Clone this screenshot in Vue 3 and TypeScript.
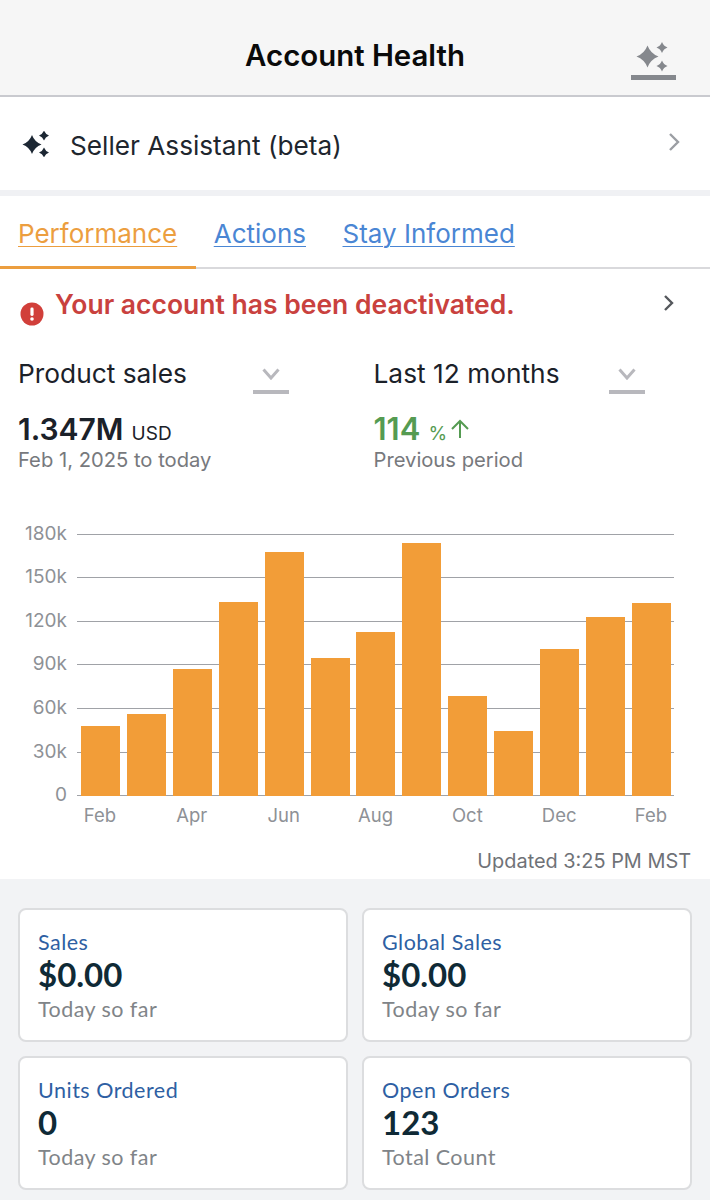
<template>
  <div class="page">
    <header class="top-bar">
      <span></span>
      <h1>Account Health</h1>
      <svg class="top-icon" width="46" height="38" viewBox="0 0 46 38">
        <path :d="star(16.5, 14.5, 11)" />
        <path :d="star(31, 5.5, 5.5)" />
        <path :d="star(31, 24, 5.5)" />
        <rect x="0" y="33" width="45" height="5" />
      </svg>
    </header>

    <div class="assistant">
      <svg width="28" height="26" viewBox="0 0 28 26">
        <path :d="star(10, 13.5, 9.5)" />
        <path :d="star(22, 4.5, 5)" />
        <path :d="star(22, 21.5, 5)" />
      </svg>
      <span class="assistant-label">Seller Assistant (beta)</span>
      <svg class="assistant-chevron" width="13" height="20" viewBox="0 0 13 20">
        <path d="M2 2l8 8-8 8" />
      </svg>
    </div>

    <nav class="tabs">
      <a class="tab active">Performance</a>
      <a class="tab">Actions</a>
      <a class="tab">Stay Informed</a>
    </nav>

    <div class="alert">
      <svg class="alert-icon" width="24" height="24" viewBox="0 0 24 24">
        <circle cx="12" cy="12" r="11.5" />
        <rect x="10.4" y="5.5" width="3.2" height="8.5" rx="1.4" />
        <circle class="dot" cx="12" cy="17" r="1.8" />
      </svg>
      <span class="alert-text">Your account has been deactivated.</span>
      <svg class="alert-chevron" width="12" height="18" viewBox="0 0 12 18">
        <path d="M2 2l7 7-7 7" />
      </svg>
    </div>

    <section class="stats">
      <div class="stat">
        <div class="select">
          <span>Product sales</span>
          <span class="caret">
            <svg width="18" height="12" viewBox="0 0 18 12"><path d="M1.5 1.5L9 10l7.500-8.500" /></svg>
          </span>
        </div>
        <div class="figure"><b>1.347M</b> <small>USD</small></div>
        <div class="note">Feb 1, 2025 to today</div>
      </div>
      <div class="stat">
        <div class="select">
          <span>Last 12 months</span>
          <span class="caret">
            <svg width="18" height="12" viewBox="0 0 18 12"><path d="M1.5 1.5L9 10l7.500-8.500" /></svg>
          </span>
        </div>
        <div class="figure up">
          <b>114</b> <small>%</small>
          <svg width="20" height="20" viewBox="0 0 20 20"><path d="M10 19V2M2 10l8-8 8 8" /></svg>
        </div>
        <div class="note">Previous period</div>
      </div>
    </section>

    <section class="chart">
      <div class="plot">
        <div class="grid-lines">
          <div v-for="tick in ticks" :key="tick" class="grid-row">
            <span class="tick">{{ tick }}</span>
            <span class="line"></span>
          </div>
        </div>
        <div class="bars">
          <div v-for="(value, i) in sales" :key="i" class="bar" :style="{ height: barHeight(value) + 'px' }"></div>
        </div>
      </div>
      <div class="months">
        <span v-for="(month, i) in months" :key="i">{{ month }}</span>
      </div>
      <div class="updated">Updated 3:25 PM MST</div>
    </section>

    <section class="cards">
      <div v-for="card in cards" :key="card.title" class="card">
        <div class="card-title">{{ card.title }}</div>
        <div class="card-value">{{ card.value }}</div>
        <div class="card-note">{{ card.note }}</div>
      </div>
    </section>
  </div>
</template>

<script setup lang="ts">
const ticks = ['180k', '150k', '120k', '90k', '60k', '30k', '0'];
const sales = [48.3, 56.5, 87.4, 133.5, 167.6, 95, 113, 173.6, 69, 44.6, 100.8, 123, 132.8];
const months = ['Feb', '', 'Apr', '', 'Jun', '', 'Aug', '', 'Oct', '', 'Dec', '', 'Feb'];

const cards = [
  { title: 'Sales', value: '$0.00', note: 'Today so far' },
  { title: 'Global Sales', value: '$0.00', note: 'Today so far' },
  { title: 'Units Ordered', value: '0', note: 'Today so far' },
  { title: 'Open Orders', value: '123', note: 'Total Count' },
];

const barHeight = (value: number) => (value / 180) * 262;

// four point sparkle centred on cx, cy
const star = (cx: number, cy: number, r: number) => {
  const k = r * 0.27;
  return `M${cx} ${cy - r}Q${cx + k} ${cy - k} ${cx + r} ${cy}Q${cx + k} ${cy + k} ${cx} ${cy + r}Q${cx - k} ${cy + k} ${cx - r} ${cy}Q${cx - k} ${cy - k} ${cx} ${cy - r}Z`;
};
</script>

<style scoped>
.page {
  width: 710px;
  height: 1200px;
  overflow: hidden;
  background: #fff;
  font-family: Inter, "Liberation Sans", sans-serif;
  color: #1b2129;
}

.top-bar {
  display: grid;
  grid-template-columns: 1fr auto 1fr;
  align-items: center;
  height: 95px;
  background: #f6f6f6;
  border-bottom: 2px solid #c9cacf;
}

.top-bar h1 {
  margin: 0;
  padding-top: 16px;
  font-size: 29.4px;
  font-weight: 600;
  color: #0a0a0a;
}

.top-icon {
  justify-self: end;
  margin: 27px 33px 0 0;
  fill: #85888d;
}

.assistant {
  display: flex;
  align-items: center;
  height: 93px;
  padding: 0 29px 0 22px;
  fill: #1c2733;
}

.assistant-label {
  margin: 3px 0 0 20px;
  font-size: 26.2px;
  color: #20262e;
}

.assistant-chevron {
  margin: -4px 0 0 auto;
  fill: none;
  stroke: #9b9ea3;
  stroke-width: 2.4;
}

.tabs {
  display: flex;
  gap: 36.5px;
  height: 71px;
  padding: 0 18px;
  border-top: 6px solid #f0f1f4;
  border-bottom: 2px solid #d9d9dc;
}

.tab {
  position: relative;
  padding-top: 20px;
  font-size: 26px;
  line-height: 36px;
  color: #4a86d4;
  text-decoration: underline;
  text-decoration-thickness: 1px;
  text-underline-offset: 3px;
}

.tab.active {
  color: #ec9e3f;
}

.tab.active::after {
  content: "";
  position: absolute;
  left: -18px;
  right: -19px;
  bottom: -2px;
  height: 3px;
  background: #ec9e3f;
}

.alert {
  display: flex;
  align-items: flex-start;
  height: 84px;
  padding: 0 35px 0 20px;
}

.alert-icon {
  margin-top: 33px;
  fill: #d13f3a;
  flex: none;
}

.alert-icon rect,
.alert-icon .dot {
  fill: #fff;
}

.alert-text {
  margin: 18px 0 0 11px;
  font-size: 26.5px;
  font-weight: 600;
  line-height: 34px;
  color: #c9413e;
}

.alert-chevron {
  margin: 25px 0 0 auto;
  fill: none;
  stroke: #55585d;
  stroke-width: 2.4;
}

.stats {
  display: grid;
  grid-template-columns: 356px 1fr;
  padding-left: 18px;
}

.stat + .stat {
  margin-left: -0.5px;
}

.select {
  display: flex;
  justify-content: space-between;
  width: 271px;
  height: 42px;
  font-size: 26.3px;
  line-height: 42px;
}

.caret {
  display: flex;
  justify-content: center;
  width: 36px;
  height: 41px;
  padding-top: 15px;
  box-sizing: border-box;
  border-bottom: 4px solid #b8b8bd;
}

.caret svg {
  fill: none;
  stroke: #b8b8bd;
  stroke-width: 3;
}

.figure {
  display: flex;
  align-items: baseline;
  gap: 8px;
  margin-top: 16px;
  height: 36px;
  line-height: 36px;
}

.figure b {
  font-size: 30px;
  font-weight: 600;
}

.figure small {
  font-size: 19px;
}

.figure.up {
  color: #559b52;
}

.figure.up b {
  font-size: 31px;
}

.figure.up svg {
  margin-left: -5px;
  align-self: center;
  fill: none;
  stroke: #559b52;
  stroke-width: 2;
}

.note {
  margin-top: 1px;
  font-size: 20.2px;
  line-height: 24px;
  color: #77797d;
}

.chart {
  padding-top: 62px;
}

.plot {
  position: relative;
  height: 262px;
}

.grid-lines {
  display: flex;
  flex-direction: column;
  justify-content: space-between;
  height: 262px;
}

.grid-row {
  display: flex;
  align-items: center;
  height: 0;
}

.tick {
  width: 67px;
  padding-bottom: 2px;
  text-align: right;
  font-size: 19px;
  color: #8e9196;
}

.line {
  width: 597px;
  height: 1px;
  margin-left: 10px;
  background: #a0a2a7;
}

.bars {
  position: absolute;
  left: 77.5px;
  bottom: 0;
  width: 597px;
  display: grid;
  grid-template-columns: repeat(13, 1fr);
  justify-items: center;
  align-items: end;
}

.bar {
  width: 39px;
  background: #f29d38;
}

.months {
  display: grid;
  grid-template-columns: repeat(13, 1fr);
  justify-items: center;
  width: 597px;
  margin-left: 77px;
  padding-top: 9px;
  font-size: 18.5px;
  line-height: 20px;
  color: #8e9196;
  white-space: nowrap;
}

.months span {
  min-height: 20px;
}

.updated {
  padding: 24px 19px 6px 0;
  text-align: right;
  font-size: 19.9px;
  line-height: 24px;
  color: #6f7277;
}

.cards {
  display: grid;
  grid-template-columns: 330px 330px;
  grid-auto-rows: 134px;
  gap: 14px;
  padding: 29px 18px 12px;
  background: #f2f3f5;
  font-family: Lato, "Noto Sans", sans-serif;
}

.card {
  padding: 19px 18px;
  box-sizing: border-box;
  background: #fff;
  border: 2px solid #dcdddf;
  border-radius: 8px;
}

.card-title {
  font-size: 21.5px;
  line-height: 26px;
  letter-spacing: 0.5px;
  color: #2e5fa3;
}

.card-value {
  margin-top: 1px;
  font-size: 33px;
  font-weight: 700;
  line-height: 36px;
  color: #0f2a36;
}

.card-note {
  margin-top: 3px;
  font-size: 21.5px;
  line-height: 28px;
  letter-spacing: 0.45px;
  color: #808488;
}
</style>
